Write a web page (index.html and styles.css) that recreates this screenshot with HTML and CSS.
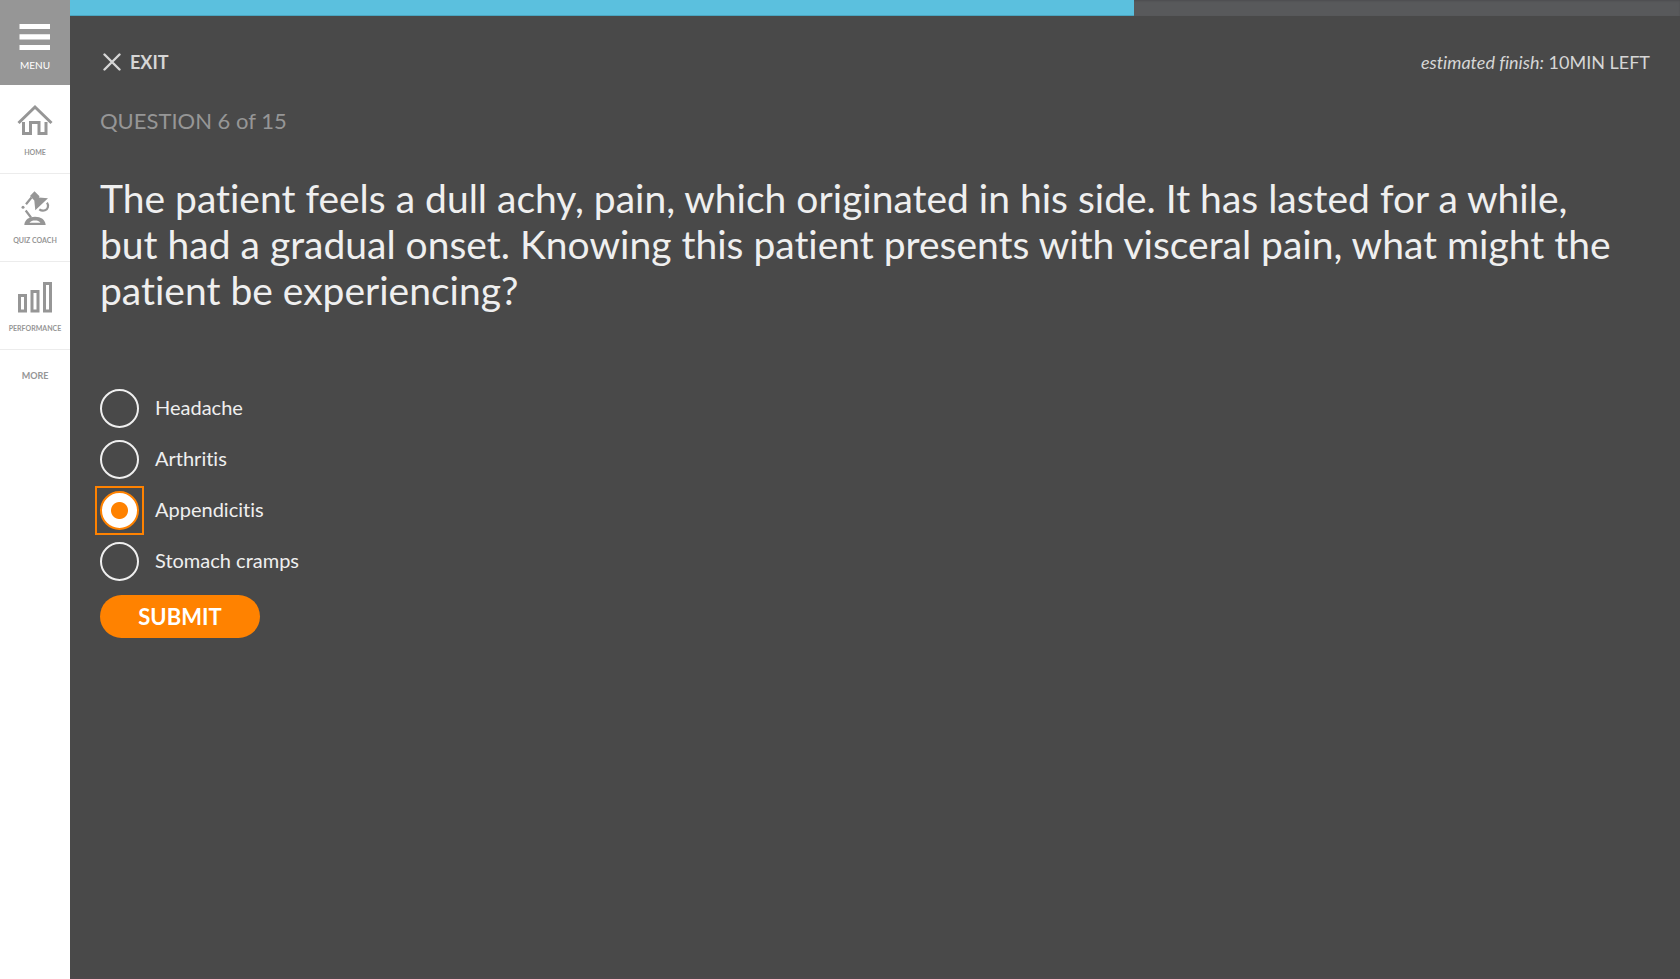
FILE: index.html
```html
<!DOCTYPE html>
<html lang="en">
<head>
<meta charset="utf-8">
<title>Quiz Coach</title>
<link rel="stylesheet" href="styles.css">
</head>
<body>
<div class="app">
  <nav class="sidebar" aria-label="Main">
    <button class="menu-button" type="button">
      <svg class="menu-icon" viewBox="0 0 32 27" aria-hidden="true"><path d="M0.500 0h30.500v5H0.500zM0.500 10.300h30.500v5.200H0.500zM0.500 21h30.500v5H0.500z" fill="currentColor"/></svg>
      <span>MENU</span>
    </button>
    <a class="nav-item" href="#home">
      <svg class="nav-icon" viewBox="0 0 36 36" fill="none" stroke="currentColor" stroke-width="3" aria-hidden="true"><path d="M1.500 20 18 4l16.500 16"/><path d="M6.500 19v11.500h7v-11h8.500v11h7V19"/></svg>
      <span class="nav-label">HOME</span>
    </a>
    <a class="nav-item" href="#quiz-coach">
      <svg class="nav-icon" viewBox="0 0 36 36" aria-hidden="true">
        <path d="M17.500.3l5 5-.7 1.300 9.200.7-12.700 12-1-9.800L13 5zM7.300 34c.5-5.500 4.700-8.300 10.700-8.300s10.200 2.800 10.700 8.300zM12.500 31.700h11c-1.300-1.700-3-2.200-5.500-2.200s-4.200.5-5.500 2.200z" fill="currentColor" fill-rule="evenodd"/>
        <path d="M14.500 6.500 9 13.300M8.700 19.500l5.300 7M30 11.700c2 3 1 6.500-2 7.600-2 .7-4 .3-5.700-1" fill="none" stroke="currentColor" stroke-width="2.200"/>
        <circle cx="6" cy="16.300" r="1.500" fill="currentColor"/>
      </svg>
      <span class="nav-label">QUIZ COACH</span>
    </a>
    <a class="nav-item" href="#performance">
      <svg class="nav-icon" viewBox="0 0 36 36" fill="none" stroke="currentColor" stroke-width="3" aria-hidden="true"><path d="M2.500 16.500h6v15.500h-6zM15 12.500h6v19.500h-6zM27.500 4.500h6v27.500h-6z"/></svg>
      <span class="nav-label">PERFORMANCE</span>
    </a>
    <button class="more-button" type="button">MORE</button>
  </nav>
  <div class="content">
    <div class="progress" role="progressbar" aria-label="Quiz progress" aria-valuemin="0" aria-valuemax="100" aria-valuenow="66">
      <div class="progress-fill" style="width: 66.1%"></div>
    </div>
    <main class="quiz">
      <header class="quiz-header">
        <button class="exit-button" type="button">
          <svg class="exit-icon" viewBox="0 0 18 18" aria-hidden="true"><path d="M1.500 1.500l15 15M16.500 1.500l-15 15" stroke="currentColor" stroke-width="2.400" stroke-linecap="round"/></svg>
          <span>EXIT</span>
        </button>
        <p class="estimate"><em>estimated finish:</em> 10MIN LEFT</p>
      </header>
      <p class="counter">QUESTION 6 of 15</p>
      <h1 class="question" id="question">The patient feels a dull achy, pain, which originated in his side. It has lasted for a while, but had a gradual onset. Knowing this patient presents with visceral pain, what might the patient be experiencing?</h1>
      <form class="answers" aria-labelledby="question">
        <label class="option"><span class="radio-frame"><input class="radio" type="radio" name="answer"></span><span class="option-text">Headache</span></label>
        <label class="option"><span class="radio-frame"><input class="radio" type="radio" name="answer"></span><span class="option-text">Arthritis</span></label>
        <label class="option"><span class="radio-frame"><input class="radio" type="radio" name="answer" checked></span><span class="option-text">Appendicitis</span></label>
        <label class="option"><span class="radio-frame"><input class="radio" type="radio" name="answer"></span><span class="option-text">Stomach cramps</span></label>
        <button class="submit" type="button">SUBMIT</button>
      </form>
    </main>
  </div>
</div>
</body>
</html>
```
FILE: styles.css
```css
* { box-sizing: border-box; }

body {
  margin: 0;
  font-family: Lato, "Open Sans", sans-serif;
  font-variant-ligatures: none;
  background: #494949;
  color: #efefef;
}

button {
  font: inherit;
  font-variant-ligatures: none;
  color: inherit;
  background: none;
  border: 0;
  padding: 0;
  cursor: pointer;
}

.app {
  display: flex;
  min-height: 100vh;
}

.sidebar {
  flex: none;
  display: flex;
  flex-direction: column;
  width: 70px;
  background: #fff;
  color: #969696;
}

.menu-button {
  display: flex;
  flex-direction: column;
  align-items: center;
  gap: 8px;
  height: 85px;
  padding-top: 24px;
  background: #969696;
  color: #fff;
  font-size: 10px;
  line-height: 12px;
}

.menu-icon {
  width: 32px;
  height: 27px;
}

.nav-item {
  display: flex;
  flex-direction: column;
  align-items: center;
  gap: 7px;
  height: 88px;
  padding-top: 17px;
  border-top: 1px solid #ececec;
  color: inherit;
  text-decoration: none;
}

.menu-button + .nav-item {
  border-top-color: transparent;
}

.nav-icon {
  width: 36px;
  height: 36px;
}

.nav-label {
  font-size: 7px;
  font-weight: 700;
  line-height: 12px;
}

.more-button {
  padding: 20px 0;
  border-top: 1px solid #ececec;
  font-size: 9px;
  font-weight: 700;
  line-height: 12px;
}

.content {
  flex: 1;
  min-width: 0;
  border-bottom: 2px solid #4d484b;
}

.progress {
  height: 16px;
  background: #58595b;
  box-shadow: inset 0 1px 2px #4c4d4f;
}

.progress-fill {
  height: 100%;
  background: #5bc0de;
  border-bottom: 1px solid #4ba6c1;
}

.quiz {
  padding: 32px 30px;
}

.quiz-header {
  display: flex;
  justify-content: space-between;
  align-items: center;
  color: #d6d6d6;
  font-size: 18px;
  line-height: 28px;
}

.exit-button {
  display: flex;
  align-items: center;
  gap: 9px;
  padding-left: 3px;
  font-weight: 700;
}

.exit-icon {
  width: 18px;
  height: 18px;
}

.estimate {
  margin: 0;
}

.counter {
  margin: 31px 0 0;
  color: #969696;
  font-size: 22px;
  line-height: 28px;
}

.question {
  margin: 40px 0 0;
  padding-right: 20px;
  font-size: 39px;
  font-weight: 400;
  line-height: 46px;
}

.answers {
  display: flex;
  flex-direction: column;
  align-items: flex-start;
  gap: 12px;
  margin-top: 76px;
}

.option {
  display: flex;
  align-items: center;
  gap: 16px;
  font-size: 20px;
  line-height: 28px;
}

.option-text {
  padding-bottom: 3px;
}

.radio-frame {
  display: flex;
}

.radio-frame:has(.radio:checked) {
  outline: 2px solid #ff8200;
  outline-offset: 3px;
}

.radio {
  appearance: none;
  width: 39px;
  height: 39px;
  margin: 0;
  border: 2px solid #efefef;
  border-radius: 50%;
  outline: 0;
}

.radio:checked {
  border-color: #ff8200;
  background: radial-gradient(circle, #ff8200 8px, #fff 9px);
}

.submit {
  min-width: 160px;
  margin-top: 2px;
  padding: 8px 24px 7px;
  border-radius: 22px;
  background: #ff8200;
  color: #fff;
  font-size: 22px;
  font-weight: 700;
  line-height: 28px;
}
```
